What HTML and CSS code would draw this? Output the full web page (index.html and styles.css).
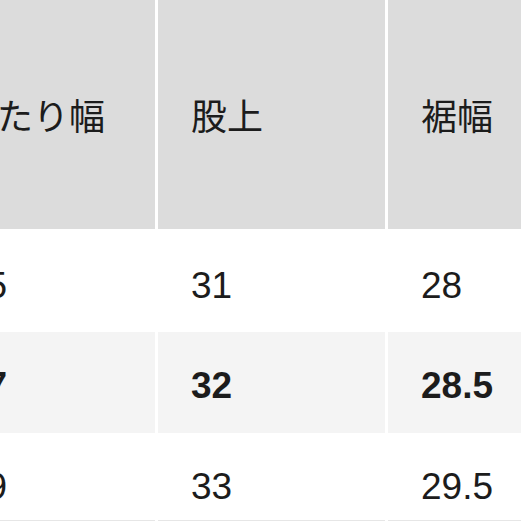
FILE: index.html
```html
<!DOCTYPE html>
<html lang="ja">
<head>
<meta charset="utf-8">
<title>サイズ表</title>
<link rel="stylesheet" href="styles.css">
</head>
<body>
<div class="size-table">
  <div class="cell head">わたり幅</div>
  <div class="cell head">股上</div>
  <div class="cell head">裾幅</div>

  <div class="cell num first c1">35</div>
  <div class="cell num first">31</div>
  <div class="cell num first">28</div>

  <div class="cell num hl c1">37</div>
  <div class="cell num hl">32</div>
  <div class="cell num hl">28.5</div>

  <div class="cell num last c1">39</div>
  <div class="cell num last">33</div>
  <div class="cell num last">29.5</div>
</div>
</body>
</html>
```

FILE: styles.css
```css
html, body {
  margin: 0;
  padding: 0;
  background: #ffffff;
  overflow: hidden;
}

.size-table {
  display: grid;
  grid-template-columns: repeat(3, 227px);
  grid-template-rows: 229px 103px 101px 88px;
  column-gap: 3px;
  margin-left: -72px;
  width: 687px;
  color: #1c1c1c;
}

.cell {
  box-sizing: border-box;
  padding-left: 33px;
  white-space: nowrap;
}

.head {
  background: #dcdcdc;
  font-family: "Noto Sans CJK JP", "Noto Sans", sans-serif;
  font-size: 36px;
  line-height: 36px;
  padding-top: 96px;
}

.num {
  font-family: "Liberation Sans", Arial, sans-serif;
  font-size: 37px;
  line-height: 37px;
  padding-top: 35px;
}

.num.c1 {
  padding-left: 38px;
}

.num.first {
  padding-top: 38px;
}

.num.hl {
  background: #f4f4f4;
  font-weight: bold;
}

.num.last {
  border-bottom: 1px solid #e6e6e6;
}
```
